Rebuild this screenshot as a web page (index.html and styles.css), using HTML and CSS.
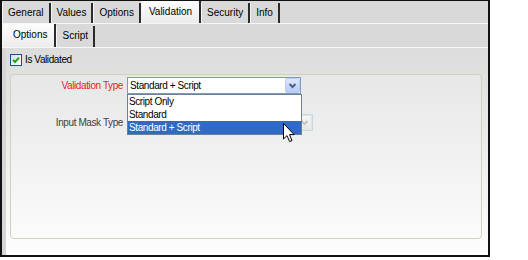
FILE: index.html
```html
<!DOCTYPE html>
<html lang="en">
<head>
    <meta charset="UTF-8">
    <title>Field Properties - Validation</title>
    <link rel="stylesheet" href="styles.css">
</head>
<body>
    <div class="window">
        <!-- Main property tabs -->
        <div class="tabs main-tabs">
            <span class="tab">General</span>
            <span class="tab">Values</span>
            <span class="tab">Options</span>
            <span class="tab active">Validation</span>
            <span class="tab">Security</span>
            <span class="tab">Info</span>
        </div>

        <!-- Validation sub tabs -->
        <div class="tabs sub-tabs">
            <span class="tab active">Options</span>
            <span class="tab">Script</span>
        </div>

        <div class="panel">
            <label class="check-row">
                <span class="checkbox">
                    <svg width="10" height="10" viewBox="0 0 10 10"><path d="M2 4.8 L4 7 L8 2.6" fill="none" stroke="#21a121" stroke-width="2"/></svg>
                </span>
                Is Validated
            </label>

            <div class="group">
                <div class="field-grid">
                    <span class="field-label required">Validation Type</span>
                    <div class="select select-wide">
                        <span class="select-value">Standard + Script</span>
                        <span class="select-btn">
                            <svg width="13" height="13" viewBox="0 0 13 13"><path d="M3.5 5 L6.5 8 L9.5 5" fill="none" stroke="#4d6185" stroke-width="2"/></svg>
                        </span>
                        <!-- Open dropdown list -->
                        <ul class="select-list">
                            <li>Script Only</li>
                            <li>Standard</li>
                            <li class="selected">Standard + Script</li>
                        </ul>
                    </div>

                    <span class="field-label">Input Mask Type</span>
                    <div class="select select-wider disabled">
                        <span class="select-value"></span>
                        <span class="select-btn">
                            <svg width="13" height="13" viewBox="0 0 13 13"><path d="M3.5 5 L6.5 8 L9.5 5" fill="none" stroke="#c4c4c4" stroke-width="2"/></svg>
                        </span>
                    </div>
                </div>

                <!-- Mouse pointer -->
                <svg class="cursor" width="12" height="20" viewBox="0 0 12 20">
                    <path d="M0.5 0.5 L0.5 16 L4 12.6 L6.6 18.6 L9 17.6 L6.5 11.6 L11.2 11.6 Z" fill="#fff" stroke="#000" stroke-width="1"/>
                </svg>
            </div>
        </div>
    </div>
</body>
</html>
```

FILE: styles.css
```css
/* Page */
body {
    margin: 0;
    background-color: #fff;
    font-family: "Liberation Sans", Arial, sans-serif;
    font-size: 10px;
    color: #000;
}

/* Outer window frame */
.window {
    width: 486px;
    height: 254px;
    border: 2px solid #111;
    border-top-width: 1px;
    display: flex;
    flex-direction: column;
    background-color: #dadada;
}

/* Tab rows */
.tabs {
    display: flex;
    align-items: stretch;
    background-color: #d9d9d9;
    border-bottom: 1px solid #f6f6f6;
}

.main-tabs {
    height: 22px;
}

.sub-tabs {
    height: 23px;
}

.tab {
    display: flex;
    align-items: center;
    padding: 0 5px 2px 5px;
    margin-top: 2px;
    border-left: 1px solid #f4f4f4;
    border-right: 2px solid #2b2b2b;
}

.tab.active {
    padding: 0 7px 2px 7px;
    margin-top: 0;
    background: linear-gradient(#fdfdfd, #ececec);
}

.sub-tabs .tab.active {
    padding: 0 7px 2px 10px;
}

/* Content panel under the tabs */
.panel {
    flex: 1;
    display: flex;
    flex-direction: column;
    padding: 5px 6px 16px 4px;
    border-left: 4px solid #d6d6d6;
    background: linear-gradient(#dcdcdc, #fefefe);
    letter-spacing: -0.4px;
}

/* Checkbox row */
.check-row {
    display: flex;
    align-items: center;
    gap: 3px;
    height: 13px;
    margin-bottom: 8px;
}

.checkbox {
    width: 10px;
    height: 10px;
    border: 1px solid #1c5180;
    background: linear-gradient(135deg, #dcdcd7, #fff);
    display: flex;
}

/* Group box */
.group {
    position: relative;
    flex: 1;
    border: 1px solid #d0d0bf;
    border-radius: 4px;
    background: linear-gradient(#e7e7e7, #fbfbfb);
    padding-top: 2px;
}

.field-grid {
    display: grid;
    grid-template-columns: 112px auto;
    column-gap: 4px;
    row-gap: 20px;
    justify-items: start;
}

.field-label {
    justify-self: end;
    line-height: 17px;
    color: #404040;
}

.field-label.required {
    color: #f01818;
}

/* Combo boxes */
.select {
    position: relative;
    box-sizing: border-box;
    height: 17px;
    border: 1px solid #7f9db9;
    background-color: #fff;
    display: flex;
    align-items: center;
}

.select-wide {
    width: 174px;
}

.select-wider {
    width: 186px;
}

.select-value {
    flex: 1;
    padding-left: 2px;
}

.select-btn {
    box-sizing: border-box;
    width: 15px;
    height: 15px;
    border: 1px solid #b9cbf3;
    border-radius: 2px;
    background: linear-gradient(#dfe8fd, #b6cbf8);
    display: flex;
}

.select.disabled {
    border-color: #c9d7e4;
    background-color: #f4f4f2;
}

.select.disabled .select-btn {
    border-color: #e2e2de;
    background: linear-gradient(#f6f6f4, #e8e8e4);
}

/* Open dropdown list */
.select-list {
    position: absolute;
    top: 16px;
    left: -1px;
    width: 175px;
    box-sizing: border-box;
    margin: 0;
    padding: 0;
    list-style: none;
    border: 1px solid #6e7f95;
    background-color: #fff;
    z-index: 2;
}

.select-list li {
    height: 13px;
    line-height: 13px;
    padding-left: 1px;
}

.select-list li.selected {
    background-color: #316ac5;
    color: #fff;
}

/* Mouse pointer over the list */
.cursor {
    position: absolute;
    left: 272px;
    top: 48px;
    z-index: 3;
}
```
